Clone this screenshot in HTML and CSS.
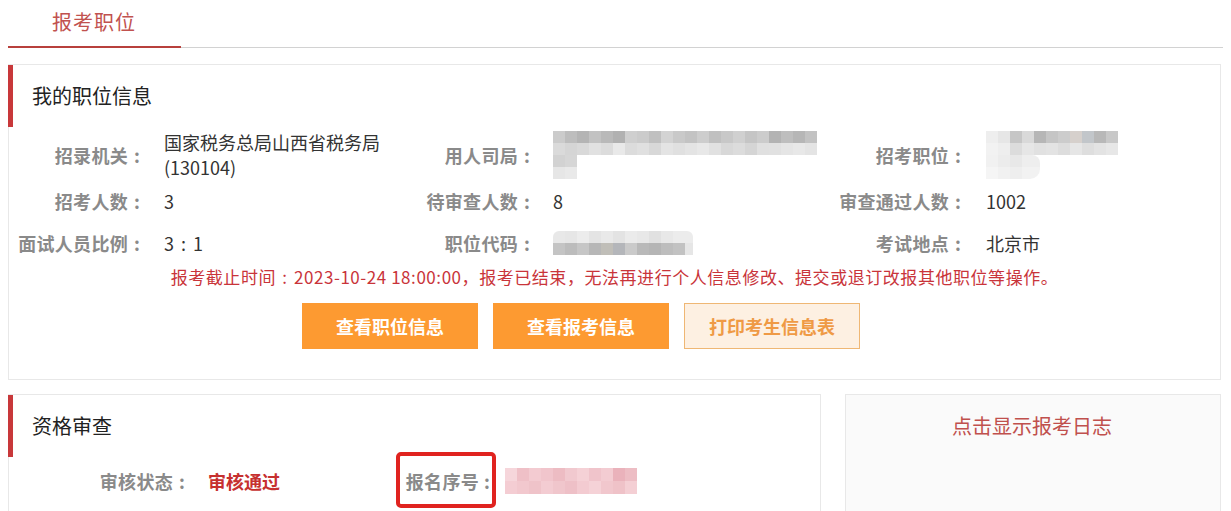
FILE: index.html
```html
<!DOCTYPE html>
<html lang="zh-CN">
<head>
<meta charset="utf-8">
<title>报考职位</title>
<link rel="stylesheet" href="styles.css">
</head>
<body>
<div class="page">
  <div class="tabs">
    <div class="tab">报考职位</div>
  </div>

  <div class="card card-main">
    <div class="card-title">我的职位信息</div>
    <div class="info-grid">
      <div class="lbl">招录机关<span class="colon">:</span></div>
      <div class="val val-c1 val-two">国家税务总局山西省税务局(130104)</div>
      <div class="lbl">用人司局<span class="colon">:</span></div>
      <div class="val val-c2">
        <div class="mosaic">
          <div class="mz mz-dept-a"></div>
          <div class="mz mz-dept-b"></div>
          <div class="mz mz-dept-c"></div>
          <div class="mz mz-dept-d"></div>
        </div>
      </div>
      <div class="lbl">招考职位<span class="colon">:</span></div>
      <div class="val val-c3">
        <div class="mosaic">
          <div class="mz mz-pos-a"></div>
          <div class="mz mz-pos-b"></div>
          <div class="mz mz-pos-c"></div>
          <div class="mz mz-pos-d"></div>
        </div>
      </div>

      <div class="lbl">招考人数<span class="colon">:</span></div>
      <div class="val val-c1">3</div>
      <div class="lbl">待审查人数<span class="colon">:</span></div>
      <div class="val val-c2">8</div>
      <div class="lbl">审查通过人数<span class="colon">:</span></div>
      <div class="val val-c3">1002</div>

      <div class="lbl">面试人员比例<span class="colon">:</span></div>
      <div class="val val-c1">3 <span class="ratio-colon">:</span> 1</div>
      <div class="lbl">职位代码<span class="colon">:</span></div>
      <div class="val val-c2">
        <div class="mosaic">
          <div class="mz mz-code-a"></div>
          <div class="mz mz-code-b"></div>
        </div>
      </div>
      <div class="lbl">考试地点<span class="colon">:</span></div>
      <div class="val val-c3">北京市</div>
    </div>

    <p class="notice">报考截止时间<span class="n-colon">:</span>2023-10-24 18:00:00，报考已结束，无法再进行个人信息修改、提交或退订改报其他职位等操作。</p>

    <div class="actions">
      <button class="btn btn-solid">查看职位信息</button>
      <button class="btn btn-solid">查看报考信息</button>
      <button class="btn btn-light">打印考生信息表</button>
    </div>
  </div>

  <div class="lower">
    <div class="card card-review">
      <div class="card-title">资格审查</div>
      <div class="review-row">
        <div class="r-lbl">审核状态<span class="colon">:</span></div>
        <div class="r-status">审核通过</div>
        <div class="r-lbl r-lbl-marked">报名序号<span class="colon colon-tight">:</span></div>
        <div class="r-val">
          <div class="mosaic">
            <div class="mz mz-no-a"></div>
            <div class="mz mz-no-b"></div>
          </div>
        </div>
      </div>
    </div>
    <div class="card card-log">
      <div class="log-link">点击显示报考日志</div>
    </div>
  </div>
</div>
</body>
</html>
```

FILE: styles.css
```css
* { box-sizing: border-box; }

html, body {
  margin: 0;
  padding: 0;
  background: #ffffff;
  font-family: "Noto Sans CJK SC", "Microsoft YaHei", sans-serif;
  color: #333333;
  overflow: hidden;
}

.page {
  padding: 0 8px;
  width: 1231px;
  height: 511px;
}

/* tabs */
.tabs {
  display: flex;
  border-bottom: 1px solid #d2d2d2;
  height: 48px;
}
.tab {
  width: 173px;
  height: 48px;
  padding-left: 44px;
  padding-top: 8px;
  font-size: 20px;
  line-height: 28px;
  letter-spacing: 1px;
  color: #c1524f;
  border-bottom: 2px solid #b8403c;
  margin-bottom: -1px;
}

/* cards */
.card {
  border: 1px solid #e8e8e8;
  background: #ffffff;
}
.card-main {
  margin-top: 16px;
  margin-right: 2px;
  padding-bottom: 30px;
}
.card-title {
  height: 62px;
  line-height: 62px;
  font-size: 20px;
  color: #222222;
  padding-left: 19px;
  border-left: 5px solid #c8383a;
  margin-left: -1px;
}

.colon {
  display: inline-block;
  width: 18px;
  text-align: center;
  letter-spacing: 0;
}
.colon-tight {
  width: 16px;
}

/* info grid */
.info-grid {
  display: grid;
  grid-template-columns: 137px 247px 143px 294px 137px 1fr;
  grid-auto-rows: minmax(42px, auto);
  align-items: center;
  margin-top: 3px;
}
.lbl {
  text-align: right;
  font-size: 18px;
  line-height: 25px;
  font-weight: bold;
  letter-spacing: 0.3px;
  color: #8a8a8a;
  white-space: nowrap;
}
.val {
  font-size: 18px;
  line-height: 25px;
  color: #333333;
}
.val-c1 { padding-left: 18px; }
.val-c2 { padding-left: 17px; }
.val-c3 { padding-left: 19px; }
.val-two {
  padding-right: 10px;
}
.ratio-colon {
  margin: 0 3px;
}

/* mosaic (blurred values) */
.mosaic {
  display: flex;
  flex-direction: column;
}
.mz { height: 12px; }

.mz-dept-a {
  width: 264px;
  background: linear-gradient(90deg,
    #cbcbcb 0 12px, #bdbdbd 12px 24px, #b4b4b4 24px 36px, #c2c2c2 36px 48px,
    #b9b9b9 48px 60px, #b1b1b1 60px 72px, #cfcfcf 72px 84px, #cbcbcb 84px 96px,
    #c0c0c0 96px 108px, #d3d3d3 108px 120px, #c9c9c9 120px 132px, #c3c3c3 132px 144px,
    #cdcdcd 144px 156px, #c0c0c0 156px 168px, #c8c8c8 168px 180px, #d0d0d0 180px 192px,
    #c5c5c5 192px 204px, #cccccc 204px 216px, #b3b3b3 216px 228px, #bebebe 228px 240px,
    #b6b6b6 240px 252px, #c2c2c2 252px 264px);
}
.mz-dept-b {
  width: 264px;
  background: linear-gradient(90deg,
    #dadada 0 12px, #d5d5d5 12px 24px, #d9d9d9 24px 36px, #e1e1e1 36px 48px,
    #dcdcdc 48px 60px, #e9e9e9 60px 72px, #dcdcdc 72px 84px, #e0e0e0 84px 96px,
    #d8d8d8 96px 108px, #e4e4e4 108px 120px, #e0e0e0 120px 132px, #e4e4e4 132px 144px,
    #e8e8e8 144px 156px, #e1e1e1 156px 168px, #d8d8d8 168px 180px, #dcdcdc 180px 192px,
    #d5d5d5 192px 204px, #e0e0e0 204px 216px, #e1e1e1 216px 228px, #e5e5e5 228px 240px,
    #e8e8e8 240px 252px, #e4e4e4 252px 264px);
}
.mz-dept-c {
  width: 24px;
  background: linear-gradient(90deg, #d2d2d2 0 12px, #d6d6d6 12px 24px);
}
.mz-dept-d {
  width: 24px;
  background: linear-gradient(90deg, #e6e6e6 0 12px, #e9e9e9 12px 24px);
}

.mz-pos-a {
  width: 132px;
  background: linear-gradient(90deg,
    #eeeeee 0 12px, #e6e6e6 12px 24px, #c6c6c6 24px 36px, #d9d9d9 36px 48px,
    #b6b6b6 48px 60px, #c5c5c5 60px 72px, #cccccc 72px 84px, #d6d0cc 84px 96px,
    #c2c6ca 96px 108px, #b8b8b8 108px 120px, #c8c8c8 120px 132px);
}
.mz-pos-b {
  width: 132px;
  background: linear-gradient(90deg,
    #f2f2f2 0 12px, #eeeeee 12px 24px, #dcdcdc 24px 36px, #e6e6e6 36px 48px,
    #e1e1e1 48px 60px, #e3e3e3 60px 72px, #dddddd 72px 84px, #e6e6e6 84px 96px,
    #dedede 96px 108px, #e3e3e3 108px 120px, #e7e7e7 120px 132px);
}
.mz-pos-c {
  width: 54px;
  border-radius: 0 8px 0 0;
  background: linear-gradient(90deg,
    #f1f1f1 0 12px, #ececec 12px 24px, #e8e8e8 24px 36px, #eeeeee 36px 54px);
}
.mz-pos-d {
  width: 54px;
  border-radius: 0 0 10px 0;
  background: linear-gradient(90deg,
    #f5f5f5 0 12px, #f1f1f1 12px 24px, #eeeeee 24px 36px, #f2f2f2 36px 54px);
}

.mz-code-a {
  width: 140px;
  border-radius: 6px 6px 0 0;
  background: linear-gradient(90deg,
    #e8e8e8 0 12px, #e6e6e6 12px 24px, #ececec 24px 36px, #e4e4e4 36px 48px,
    #e9e9e9 48px 60px, #e3e3e3 60px 72px, #ebebeb 72px 84px, #e8e8e8 84px 96px,
    #e1e1e1 96px 108px, #e8e8e8 108px 120px, #ececec 120px 140px);
}
.mz-code-b {
  width: 140px;
  background: linear-gradient(90deg,
    #c4c4c4 0 12px, #bcbcbc 12px 24px, #c6c6c6 24px 36px, #b7b7b7 36px 48px,
    #c0beb8 48px 60px, #b4b6ba 60px 72px, #cacaca 72px 84px, #b9b9b9 84px 96px,
    #b5b5b5 96px 108px, #bdbdbd 108px 120px, #c2c2c2 120px 132px, #e6e6e6 132px 140px);
}

.mz-no-a {
  width: 132px;
  height: 13px;
  background: linear-gradient(90deg,
    #f6d6db 0 12px, #efc0c7 12px 24px, #f3cbd1 24px 36px, #f1c5cc 36px 48px,
    #edbcc3 48px 60px, #f1c9cf 60px 72px, #f5d1d6 72px 84px, #f0c4cb 84px 96px,
    #f3ccd2 96px 108px, #eab2bb 108px 120px, #edbdc4 120px 132px);
}
.mz-no-b {
  width: 132px;
  height: 13px;
  background: linear-gradient(90deg,
    #f4cdd3 0 12px, #f2c8ce 12px 24px, #efc3c9 24px 36px, #f3ccd2 36px 48px,
    #f0c6cc 48px 60px, #eec0c7 60px 72px, #f3cbd1 72px 84px, #f5d2d7 84px 96px,
    #f1c7cd 96px 108px, #efc2c8 108px 120px, #f4cfd4 120px 132px);
}

/* notice */
.notice {
  margin: 1px 0 0;
  text-align: center;
  font-size: 17px;
  line-height: 24px;
  letter-spacing: 0.55px;
  color: #c9343a;
}
.n-colon {
  display: inline-block;
  width: 18px;
  text-align: center;
}

/* buttons */
.actions {
  display: flex;
  gap: 15px;
  margin-top: 14px;
  padding-left: 293px;
}
.btn {
  width: 176px;
  height: 46px;
  font-family: inherit;
  font-size: 18px;
  font-weight: bold;
  border: 1px solid transparent;
  border-radius: 0;
  padding: 0;
  cursor: pointer;
}
.btn-solid {
  background: #fd9a31;
  border-color: #fb9a34;
  color: #ffffff;
}
.btn-light {
  background: #fdf0e2;
  border-color: #efb774;
  color: #ef9a45;
}

/* lower cards */
.lower {
  display: flex;
  gap: 24px;
  margin-top: 14px;
  margin-right: 2px;
}
.card-review {
  width: 813px;
  height: 140px;
}
.card-log {
  flex: 1;
  height: 140px;
  background: #fafafa;
}
.log-link {
  text-align: center;
  height: 62px;
  line-height: 62px;
  font-size: 20px;
  color: #c0504d;
  padding-right: 2px;
}

.review-row {
  display: grid;
  grid-template-columns: 182px 199px 105px 1fr;
  align-items: center;
  margin-top: 11px;
}
.r-lbl {
  text-align: right;
  font-size: 18px;
  line-height: 24px;
  font-weight: bold;
  letter-spacing: 0.3px;
  color: #8a8a8a;
  white-space: nowrap;
}
.r-status {
  padding-left: 17px;
  font-size: 18px;
  line-height: 24px;
  font-weight: bold;
  color: #c6302f;
}
.r-val {
  padding-left: 10px;
}
.r-lbl-marked {
  position: relative;
}
.r-lbl-marked::after {
  content: "";
  position: absolute;
  left: 6px;
  right: -1px;
  top: -17px;
  bottom: -15px;
  border: 4px solid #e0231f;
  border-radius: 5px;
}
```
